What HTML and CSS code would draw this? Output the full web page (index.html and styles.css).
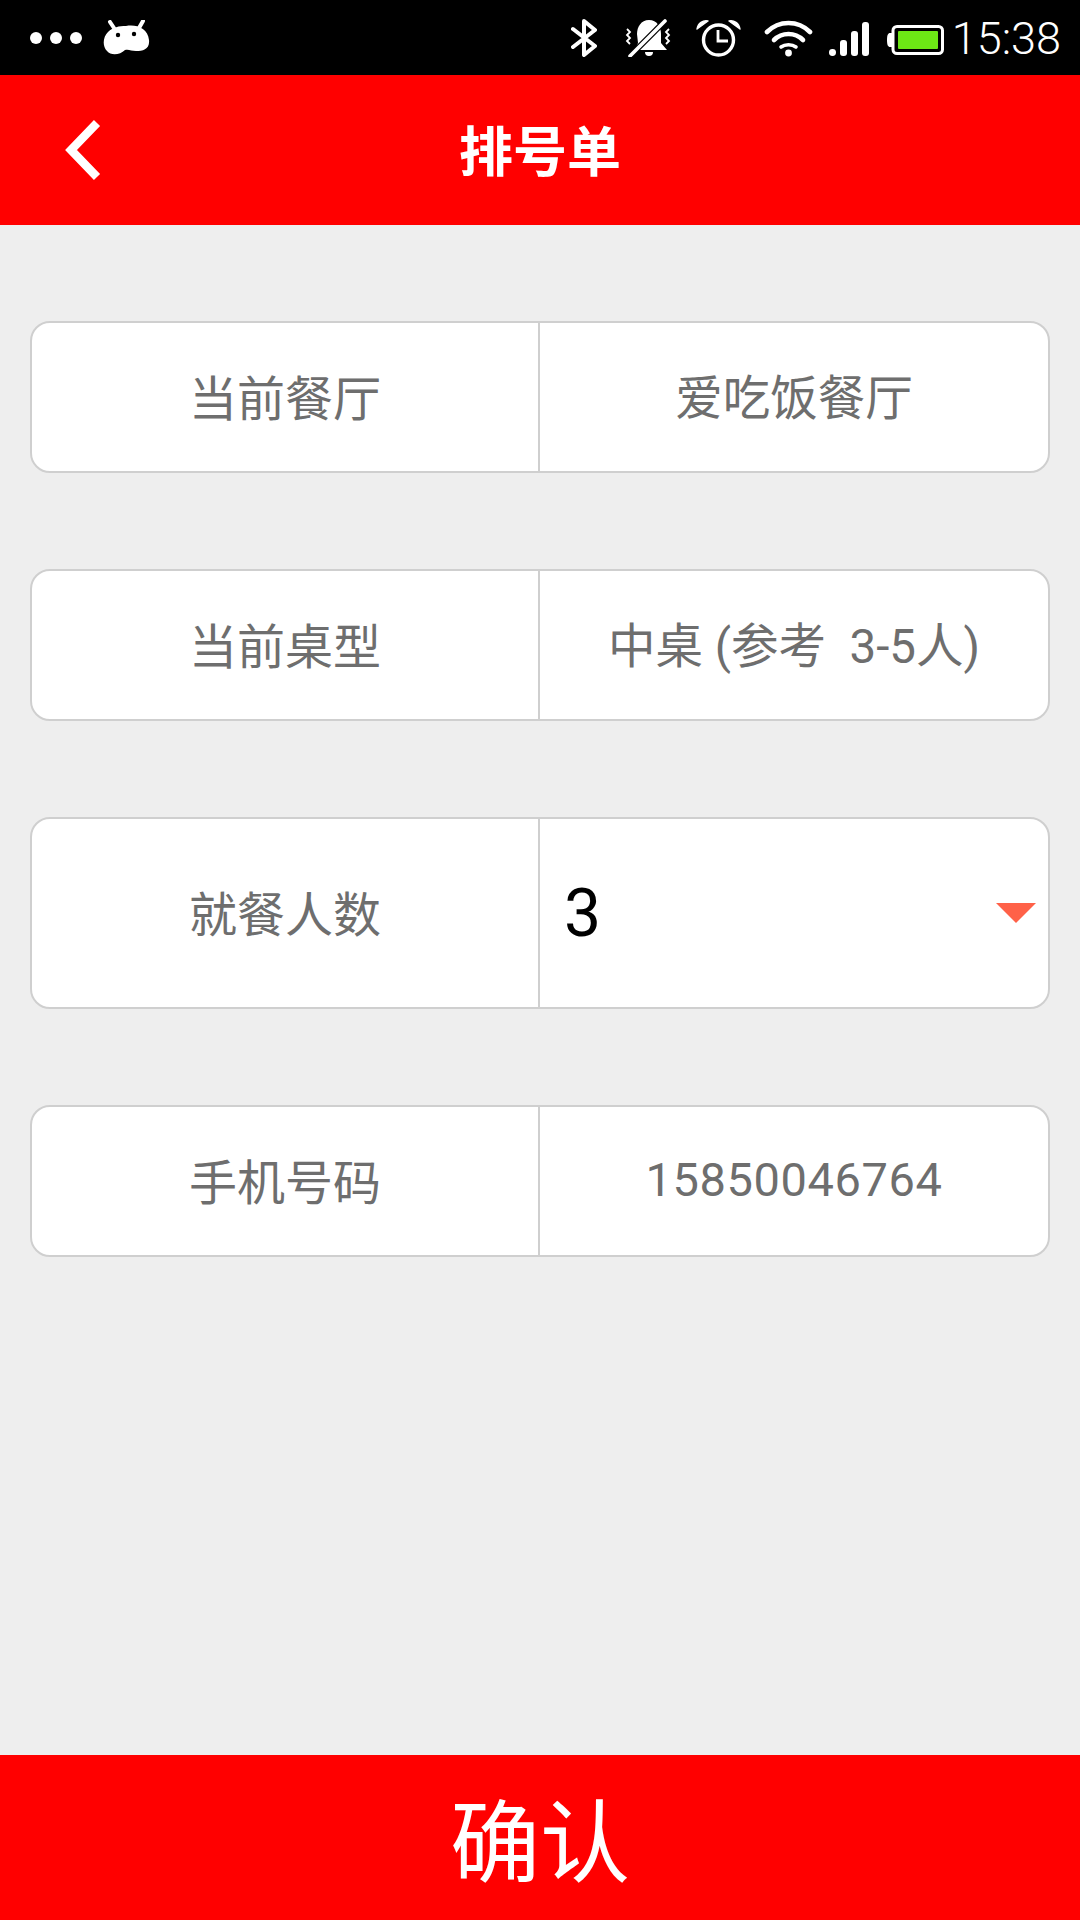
FILE: index.html
```html
<!doctype html>
<html>

<head>
	<meta charset="utf-8">
	<link rel="stylesheet" href="styles.css">
	<title>排号单</title>
</head>

<body>
	<div class="statusBar">
		<div class="statusLeft">
			<span class="dot"></span><span class="dot"></span><span class="dot"></span>
			<svg class="catIcon" width="47" height="36" viewBox="0 0 47 36">
				<path d="M7 2 L11 8 M40 1 L36 8" stroke="#fff" stroke-width="4" stroke-linecap="round" />
				<path d="M23 6 C33 4 45 8 46 20 C47 29 40 31 33 31 C28 31 26 29 22 30 C17 35 8 36 4 31 C-1 26 0 17 5 12 C10 7 16 6 23 6 Z" fill="#fff" />
				<circle cx="15" cy="15" r="2.2" fill="#000" />
				<circle cx="31" cy="14" r="2.2" fill="#000" />
			</svg>
		</div>
		<div class="statusRight">
			<svg class="btIcon" width="26" height="38" viewBox="0 0 26 38" fill="none" stroke="#fff" stroke-width="4" stroke-linejoin="round" stroke-linecap="round">
				<path d="M2 10 L24 27 L13 36 V2 L24 11 L2 28" />
			</svg>
			<svg class="bellIcon" width="46" height="38" viewBox="0 0 46 38">
				<path d="M24 1 C32 1 36 8 36 15 L36 24 L42 31 L19 31 L10 31 L13 24 L12 15 C12 8 16 1 24 1 Z M20 33 h8 a4 4 0 0 1 -8 0 Z" fill="#fff" />
				<path d="M5 37 L40 2" stroke="#000" stroke-width="6" />
				<path d="M5 37 L40 2" stroke="#fff" stroke-width="3.6" stroke-linecap="round" />
				<path d="M2 10 l3 3 l-3 3 l3 3 l-3 3 l3 3 M44 10 l-3 3 l3 3 l-3 3 l3 3 l-3 3" fill="none" stroke="#fff" stroke-width="1.8" />
			</svg>
			<svg class="alarmIcon" width="45" height="38" viewBox="0 0 45 38" fill="none" stroke="#fff">
				<circle cx="22.5" cy="21" r="15" stroke-width="3.4" />
				<path d="M22 11 V22 H32" stroke-width="2.8" />
				<path d="M1 10 C2 4 7 1 12 2 Z M44 10 C43 4 38 1 33 2 Z" fill="#fff" stroke-width="1.4" stroke-linejoin="round" />
			</svg>
			<svg class="wifiIcon" width="49" height="38" viewBox="0 0 49 38" fill="none" stroke="#fff" stroke-width="4.6" stroke-linecap="round">
				<path d="M3 13 C15 1 34 1 46 13" />
				<path d="M10 21 C18 13 31 13 39 21" />
				<path d="M17 28 C21 25 28 25 32 28" stroke-width="3.6" />
				<circle cx="24.5" cy="34" r="3.4" fill="#fff" stroke="none" />
			</svg>
			<svg class="signalIcon" width="40" height="35" viewBox="0 0 40 35" fill="#fff">
				<rect x="0" y="27" width="7" height="7" rx="3.4" />
				<rect x="11" y="18" width="7" height="16" rx="3" />
				<rect x="22" y="9" width="7" height="25" rx="3" />
				<rect x="33" y="0" width="7" height="34" rx="3" />
			</svg>
			<svg class="batteryIcon" width="57" height="30" viewBox="0 0 57 30">
				<path d="M6 8 H3 C1 8 0 10 0 15 C0 20 1 22 3 22 H6 Z" fill="#fff" />
				<rect x="6" y="1.5" width="49.5" height="27" rx="4" fill="none" stroke="#fff" stroke-width="3" />
				<rect x="11" y="6" width="40" height="18" rx="1" fill="#6de715" />
			</svg>
			<span class="clock">15:38</span>
		</div>
	</div>

	<div class="titleBar">
		<svg class="backIcon" width="36" height="60" viewBox="0 0 36 60" fill="none" stroke="#fff" stroke-width="8.5">
			<path d="M32 3 L6 30 L32 57" />
		</svg>
		<span class="titleText">排号单</span>
	</div>

	<div class="formArea">
		<div class="formRow">
			<div class="rowLabel">当前餐厅</div>
			<div class="rowValue">爱吃饭餐厅</div>
		</div>
		<div class="formRow">
			<div class="rowLabel">当前桌型</div>
			<div class="rowValue">中桌 (参考&nbsp; 3-5人)</div>
		</div>
		<div class="formRow tallRow">
			<div class="rowLabel">就餐人数</div>
			<div class="rowValue selectValue">
				<span class="selectText">3</span>
				<svg class="selectArrow" width="40" height="20" viewBox="0 0 40 20">
					<path d="M0 0 H40 L20 20 Z" fill="#ff6148" />
				</svg>
			</div>
		</div>
		<div class="formRow">
			<div class="rowLabel">手机号码</div>
			<div class="rowValue phoneValue">15850046764</div>
		</div>
	</div>

	<div class="confirmBtn">确认</div>
</body>

</html>
```

FILE: styles.css
```css
* {
	box-sizing: border-box;
}

html,
body {
	margin: 0;
	height: 1920px;
}

body {
	display: flex;
	flex-direction: column;
	background: #eeeeee;
	font-family: Roboto, "Noto Sans CJK SC", sans-serif;
	overflow: hidden;
}

.statusBar {
	display: flex;
	justify-content: space-between;
	align-items: center;
	height: 75px;
	padding: 0 19px 0 30px;
	background: #000;
	color: #fff;
}

.statusLeft {
	display: flex;
	align-items: center;
	gap: 8px;
}

.dot {
	width: 12px;
	height: 12px;
	border-radius: 50%;
	background: #fff;
}

.catIcon {
	margin-left: 13px;
}

.statusRight {
	display: flex;
	align-items: center;
	height: 75px;
}

.statusRight svg {
	display: block;
}

.statusRight .btIcon {
	margin-right: 28px;
}

.statusRight .bellIcon {
	margin-right: 25px;
}

.statusRight .alarmIcon {
	margin-right: 23px;
}

.statusRight .wifiIcon {
	margin-right: 16px;
}

.statusRight .signalIcon {
	margin: 3px 18px 0 0;
}

.statusRight .batteryIcon {
	margin: 4px 8px 0 0;
}

.clock {
	font-size: 45px;
	font-weight: 300;
	line-height: 75px;
	padding-top: 2px;
}

.titleBar {
	position: relative;
	display: flex;
	align-items: center;
	justify-content: center;
	height: 150px;
	padding-bottom: 4px;
	background: #ff0000;
	color: #fff;
}

.backIcon {
	position: absolute;
	left: 65px;
	top: 45px;
}

.titleText {
	font-size: 54px;
	font-weight: 700;
}

.formArea {
	flex: 1;
	display: flex;
	flex-direction: column;
	gap: 96px;
	padding: 96px 30px 0 30px;
}

.formRow {
	display: grid;
	grid-template-columns: 506px 1fr;
	height: 152px;
	background: #fff;
	border: 2px solid #cfcfcf;
	border-radius: 20px;
	font-size: 48px;
	color: #6e6e6e;
}

.tallRow {
	height: 192px;
}

.rowLabel,
.rowValue {
	display: flex;
	align-items: center;
	justify-content: center;
	padding-bottom: 5px;
}

.rowValue {
	font-size: 47.5px;
	border-left: 2px solid #cfcfcf;
}

.phoneValue {
	font-size: 47px;
	letter-spacing: 0.6px;
	padding-bottom: 3px;
}

.selectValue {
	position: relative;
	justify-content: flex-start;
	padding: 0 0 0 24px;
}

.selectText {
	font-size: 66px;
	color: #000;
}

.selectArrow {
	position: absolute;
	right: 12px;
	top: 84px;
}

.confirmBtn {
	display: flex;
	align-items: center;
	justify-content: center;
	height: 165px;
	padding-bottom: 4px;
	background: #ff0000;
	color: #fff;
	font-size: 90px;
}
```
